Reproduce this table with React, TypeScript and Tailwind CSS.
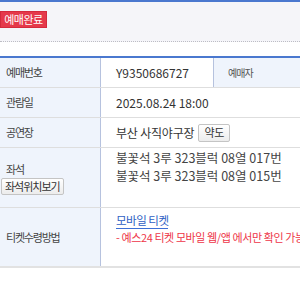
export default function App() {
    const font = { fontFamily: '"Noto Sans CJK KR", "Noto Sans", sans-serif' };

    return (
        <div className="w-[300px] h-[300px] overflow-hidden bg-white text-[12px] text-[#333]" style={font}>
            {/* Status header */}
            <div className="h-[2px] bg-[#4a78cf]" />
            <div className="h-[40px] bg-[#f5f5f9] pt-[9px] border-b border-dotted border-[#bdbdc4]">
                <span className="flex items-center justify-center w-[47px] h-[17px] bg-[#e5394b] border border-[#d42a3c] text-white text-[11px] tracking-[-0.5px] leading-none">
                    예매완료
                </span>
            </div>
            <div className="h-[14px]" />

            {/* Detail table */}
            <div className="w-[420px] border-t-2 border-[#4a78cf]">
                {/* 예매번호 */}
                <div className="flex h-[30px] border-b border-[#dedede]">
                    <div className="w-[101px] shrink-0 bg-[#eff4fc] border-r border-[#b6c2de] flex items-center pl-[6px] text-[11px] tracking-[-1.2px] text-[#444]">
                        예매번호
                    </div>
                    <div className="w-[112px] shrink-0 flex items-center pl-[15px] text-[12px]">
                        Y9350686727
                    </div>
                    <div className="flex-1 bg-[#eff4fc] border-l border-[#b6c2de] flex items-center pl-[14px] text-[10px] tracking-[-1px] text-[#555]">
                        예매자
                    </div>
                </div>

                {/* 관람일 */}
                <div className="flex h-[30px] border-b border-[#dedede]">
                    <div className="w-[101px] shrink-0 bg-[#eff4fc] border-r border-[#b6c2de] flex items-center pl-[6px] text-[11px] tracking-[-1.2px] text-[#444]">
                        관람일
                    </div>
                    <div className="flex-1 flex items-center pl-[15px] text-[12px]">
                        2025.08.24 18:00
                    </div>
                </div>

                {/* 공연장 */}
                <div className="flex h-[30px] border-b border-[#dedede]">
                    <div className="w-[101px] shrink-0 bg-[#eff4fc] border-r border-[#b6c2de] flex items-center pl-[6px] text-[11px] tracking-[-1.2px] text-[#444]">
                        공연장
                    </div>
                    <div className="flex-1 flex items-center pl-[15px] gap-[4px] text-[12px] tracking-[-0.2px]">
                        <span>부산 사직야구장</span>
                        <button className="h-[18px] px-[5px] border border-[#c4c4c4] rounded-[2px] bg-gradient-to-b from-white to-[#ececec] text-[11px] leading-none text-[#333]">
                            약도
                        </button>
                    </div>
                </div>

                {/* 좌석 */}
                <div className="flex h-[60px] border-b border-[#dedede]">
                    <div className="w-[101px] shrink-0 bg-[#eff4fc] border-r border-[#b6c2de] flex flex-col justify-center pl-px text-[11px] tracking-[-1px] text-[#444]">
                        <span className="pl-[5px] leading-[18px]">좌석</span>
                        <button className="self-start h-[17px] px-[3px] border border-[#c4c4c4] rounded-[2px] bg-gradient-to-b from-white to-[#ececec] leading-none text-[#333]">
                            좌석위치보기
                        </button>
                    </div>
                    <div className="flex-1 pl-[15px] pt-[1px] leading-[18px] text-[12.5px] text-[#444]">
                        <div>불꽃석 3루 323블럭 08열 017번</div>
                        <div>불꽃석 3루 323블럭 08열 015번</div>
                    </div>
                </div>

                {/* 티켓수령방법 */}
                <div className="flex h-[60px] border-b-2 border-[#e2e2e2]">
                    <div className="w-[101px] shrink-0 bg-[#eff4fc] border-r border-[#b6c2de] flex items-center pl-[6px] text-[11px] tracking-[-1.2px] text-[#444]">
                        티켓수령방법
                    </div>
                    <div className="flex-1 pl-[15px] pt-[3px] whitespace-nowrap">
                        <span className="inline-block leading-[15px] border-b border-[#3d6fd6] text-[11.5px] tracking-[-0.5px] text-[#2f5fc4]">
                            모바일 티켓
                        </span>
                        <div className="leading-[17px] text-[11px] tracking-[-0.4px] text-[#ee3548]">
                            - 예스24 티켓 모바일 웹/앱 에서만 확인 가능
                        </div>
                    </div>
                </div>
            </div>
        </div>
    );
}
